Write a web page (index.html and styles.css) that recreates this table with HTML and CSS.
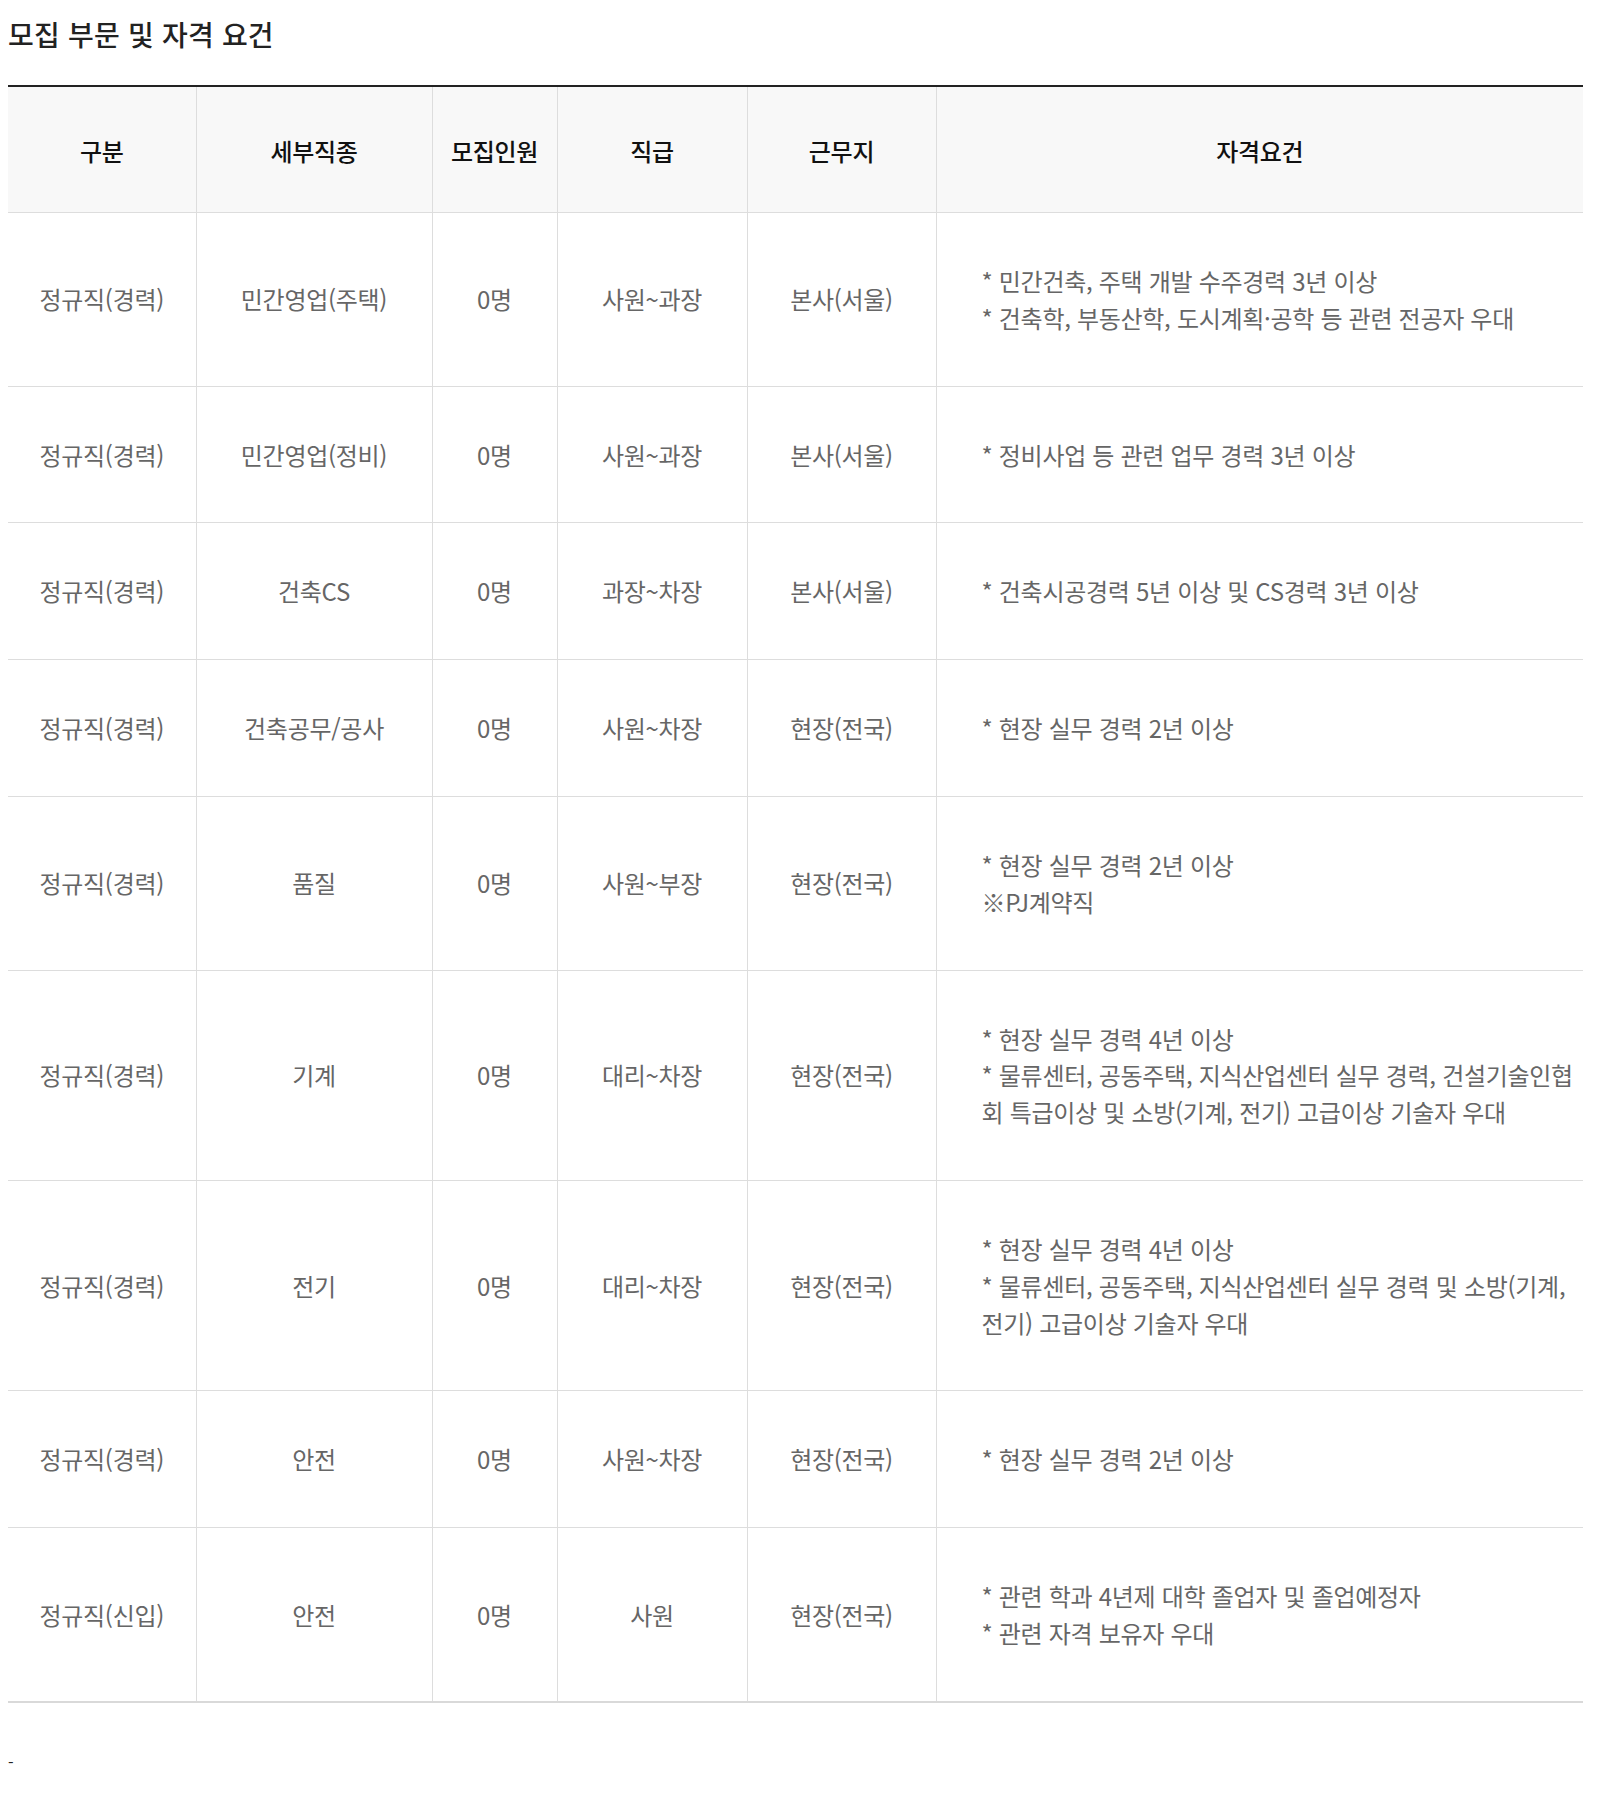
FILE: index.html
```html
<!DOCTYPE html>
<html lang="ko">
<head>
<meta charset="utf-8">
<link rel="stylesheet" href="styles.css">
</head>
<body>
<div class="wrap">
  <h3 class="title">모집 부문 및 자격 요건</h3>
  <table class="recruit">
    <colgroup>
      <col class="c1"><col class="c2"><col class="c3"><col class="c4"><col class="c5"><col class="c6">
    </colgroup>
    <thead>
      <tr><th>구분</th><th>세부직종</th><th>모집인원</th><th>직급</th><th>근무지</th><th>자격요건</th></tr>
    </thead>
    <tbody>
      <tr><td>정규직(경력)</td><td>민간영업(주택)</td><td>0명</td><td>사원~과장</td><td>본사(서울)</td>
        <td class="req">* 민간건축, 주택 개발 수주경력 3년 이상<br>* 건축학, 부동산학, 도시계획·공학 등 관련 전공자 우대</td></tr>
      <tr><td>정규직(경력)</td><td>민간영업(정비)</td><td>0명</td><td>사원~과장</td><td>본사(서울)</td>
        <td class="req">* 정비사업 등 관련 업무 경력 3년 이상</td></tr>
      <tr><td>정규직(경력)</td><td>건축CS</td><td>0명</td><td>과장~차장</td><td>본사(서울)</td>
        <td class="req">* 건축시공경력 5년 이상 및 CS경력 3년 이상</td></tr>
      <tr><td>정규직(경력)</td><td>건축공무/공사</td><td>0명</td><td>사원~차장</td><td>현장(전국)</td>
        <td class="req">* 현장 실무 경력 2년 이상</td></tr>
      <tr><td>정규직(경력)</td><td>품질</td><td>0명</td><td>사원~부장</td><td>현장(전국)</td>
        <td class="req">* 현장 실무 경력 2년 이상<br>※PJ계약직</td></tr>
      <tr><td>정규직(경력)</td><td>기계</td><td>0명</td><td>대리~차장</td><td>현장(전국)</td>
        <td class="req">* 현장 실무 경력 4년 이상<br>* 물류센터, 공동주택, 지식산업센터 실무 경력, 건설기술인협회 특급이상 및 소방(기계, 전기) 고급이상 기술자 우대</td></tr>
      <tr><td>정규직(경력)</td><td>전기</td><td>0명</td><td>대리~차장</td><td>현장(전국)</td>
        <td class="req">* 현장 실무 경력 4년 이상<br>* 물류센터, 공동주택, 지식산업센터 실무 경력 및 소방(기계, 전기) 고급이상 기술자 우대</td></tr>
      <tr><td>정규직(경력)</td><td>안전</td><td>0명</td><td>사원~차장</td><td>현장(전국)</td>
        <td class="req">* 현장 실무 경력 2년 이상</td></tr>
      <tr><td>정규직(신입)</td><td>안전</td><td>0명</td><td>사원</td><td>현장(전국)</td>
        <td class="req">* 관련 학과 4년제 대학 졸업자 및 졸업예정자<br>* 관련 자격 보유자 우대</td></tr>
    </tbody>
  </table>
  <p class="dash">-</p>
</div>
</body>
</html>
```

FILE: styles.css
```css
html, body {
  margin: 0;
  padding: 0;
  background: #fff;
}
body {
  padding: 8px;
  font-family: "Noto Sans CJK KR", "Noto Sans", sans-serif;
  color: #222;
}
.wrap {
  width: 1575px;
}
.title {
  margin: 13px 0 0 0;
  font-size: 28px;
  font-weight: 500;
  line-height: 26px;
  letter-spacing: 0.2px;
  color: #222;
}
.recruit {
  margin-top: 38px;
  width: 1575px;
  border-collapse: collapse;
  table-layout: fixed;
  border-top: 2px solid #222;
  border-bottom: 2px solid #d9d9d9;
}
.c1 { width: 188px; }
.c2 { width: 236px; }
.c3 { width: 125px; }
.c4 { width: 190px; }
.c5 { width: 189px; }
.c6 { width: 647px; }
.recruit th {
  background: #f8f8f8;
  font-size: 24px;
  font-weight: 500;
  color: #111;
  line-height: 37px;
  padding: 45px 0 43px 0;
  border-left: 1px solid #ddd;
  border-bottom: 1px solid #ddd;
  letter-spacing: -0.3px;
}
.recruit td {
  font-size: 24px;
  font-weight: 400;
  color: #666;
  line-height: 36.8px;
  padding: 50px 0 49px 0;
  text-align: center;
  border-left: 1px solid #ddd;
  border-bottom: 1px solid #ddd;
  letter-spacing: -0.3px;
}
.recruit th:first-child, .recruit td:first-child {
  border-left: none;
}
.recruit td.req {
  text-align: left;
  padding-left: 45px;
  padding-right: 4px;
  word-break: break-all;
}
.dash {
  margin: 49px 0 0 0;
  font-size: 16px;
  line-height: 20px;
  color: #222;
}
```
